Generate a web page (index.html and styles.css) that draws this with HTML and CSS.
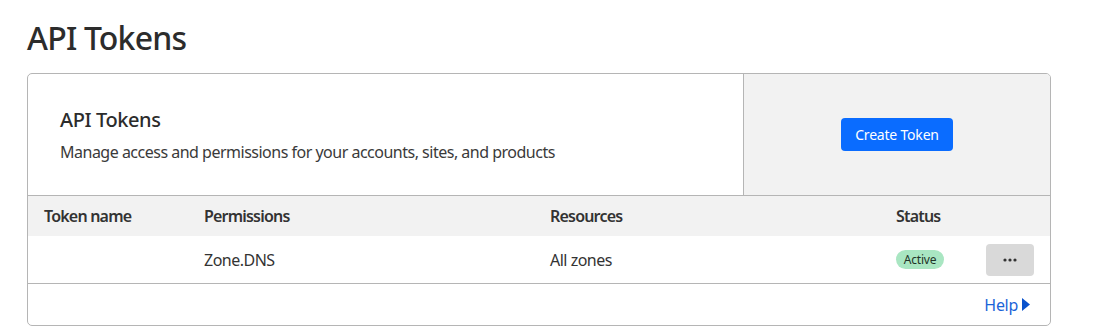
FILE: index.html
```html
<!DOCTYPE html>
<html lang="en">
<head>
<meta charset="utf-8">
<title>API Tokens</title>
<link rel="stylesheet" href="styles.css">
</head>
<body>
<main class="page">
  <h1 class="page-title">API Tokens</h1>
  <section class="card">
    <div class="card-top">
      <div class="intro">
        <h2 class="intro-title">API Tokens</h2>
        <p class="intro-text">Manage access and permissions for your accounts, sites, and products</p>
      </div>
      <div class="actions">
        <button class="btn-primary" type="button">Create Token</button>
      </div>
    </div>
    <div class="table">
      <div class="row head">
        <div class="cell">Token name</div>
        <div class="cell">Permissions</div>
        <div class="cell">Resources</div>
        <div class="cell">Status</div>
      </div>
      <div class="row body">
        <div class="cell"></div>
        <div class="cell">Zone.DNS</div>
        <div class="cell">All zones</div>
        <div class="cell status-cell">
          <span class="badge">Active</span>
          <button class="btn-more" type="button" aria-label="More">
            <svg width="14" height="4" viewBox="0 0 14 4"><circle cx="2" cy="2" r="1.6"/><circle cx="7" cy="2" r="1.6"/><circle cx="12" cy="2" r="1.6"/></svg>
          </button>
        </div>
      </div>
    </div>
    <div class="card-foot">
      <a class="help" href="#">Help<svg class="help-arrow" width="8" height="13" viewBox="0 0 8 13"><path d="M0 0 L8 6.5 L0 13 Z"/></svg></a>
    </div>
  </section>
</main>
</body>
</html>
```

FILE: styles.css
```css
* { box-sizing: border-box; }
html, body { margin: 0; padding: 0; background: #fff; }
body {
  font-family: "Noto Sans", "Open Sans", "DejaVu Sans", sans-serif;
  color: #313131;
}
.page {
  padding: 18px 0 0 27px;
  width: 1051px;
}
.page-title {
  margin: 0 0 15px;
  font-size: 32px;
  line-height: 40px;
  font-weight: 500;
  letter-spacing: -0.8px;
  color: #2c2c2c;
}
.card {
  border: 1px solid #b5b5b5;
  border-radius: 5px;
  overflow: hidden;
  width: 1024px;
}
.card-top {
  display: flex;
  height: 122px;
  border-bottom: 1px solid #b5b5b5;
}
.intro {
  width: 716px;
  padding-left: 32px;
  display: flex;
  flex-direction: column;
  justify-content: center;
  gap: 6px;
  border-right: 1px solid #b5b5b5;
}
.intro-title {
  margin: 0;
  font-size: 20px;
  line-height: 28px;
  font-weight: 500;
  letter-spacing: -0.4px;
  color: #2c2c2c;
}
.intro-text {
  margin: 0;
  font-size: 16px;
  line-height: 24px;
  letter-spacing: -0.5px;
  color: #3a3a3a;
}
.actions {
  flex: 1;
  background: #f2f2f2;
  display: flex;
  align-items: center;
  justify-content: center;
}
.btn-primary {
  width: 112px;
  height: 33px;
  border: 0;
  border-radius: 4px;
  background: #0a6cff;
  color: #fff;
  font-family: inherit;
  font-size: 14px;
  letter-spacing: -0.2px;
  padding: 0;
  cursor: pointer;
}
.row {
  display: grid;
  grid-template-columns: 160px 346px 346px 1fr;
  align-items: center;
}
.cell { padding-left: 16px; }
.row.head {
  height: 40px;
  background: #f2f2f2;
  font-size: 16px;
  font-weight: 600;
  letter-spacing: -0.8px;
  color: #333;
}
.row.body {
  height: 48px;
  font-size: 16px;
  letter-spacing: -0.5px;
  color: #333;
  border-bottom: 1px solid #b5b5b5;
}
.status-cell {
  display: flex;
  align-items: center;
  justify-content: space-between;
  padding-right: 16px;
}
.badge {
  display: inline-flex;
  align-items: center;
  justify-content: center;
  width: 48px;
  height: 19px;
  border-radius: 10px;
  background: #a9e6c2;
  color: #1f3327;
  font-size: 12px;
  letter-spacing: -0.2px;
}
.btn-more {
  width: 48px;
  height: 32px;
  border: 0;
  border-radius: 4px;
  background: #d9d9d9;
  display: flex;
  align-items: center;
  justify-content: center;
  padding: 0;
  fill: #333;
}
.card-foot {
  height: 41px;
  display: flex;
  align-items: center;
  justify-content: flex-end;
  padding-right: 20px;
}
.help {
  display: inline-flex;
  align-items: center;
  gap: 4px;
  font-size: 16px;
  letter-spacing: -0.3px;
  color: #1b64d8;
  text-decoration: none;
}
.help-arrow { fill: #0a52cc; }
```
